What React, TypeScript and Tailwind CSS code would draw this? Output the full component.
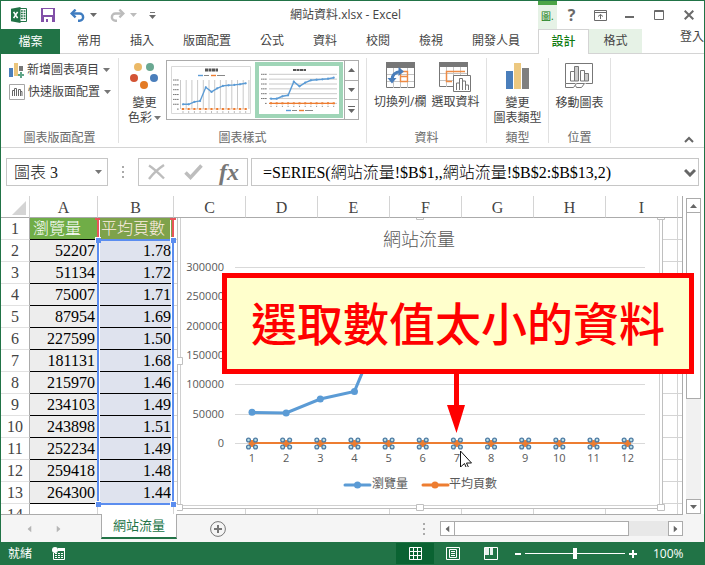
import { useState } from "react";
import type { ReactNode } from "react";

const uiFont = "font-['Open_Sans','Noto_Sans_CJK_TC',sans-serif]";
const cellFont = "font-['Liberation_Serif','Noto_Sans_CJK_TC',serif]";

const tabs = ["常用", "插入", "版面配置", "公式", "資料", "校閱", "檢視", "開發人員"];

const rows: [number, string][] = [
  [52207, "1.78"],
  [51134, "1.72"],
  [75007, "1.71"],
  [87954, "1.69"],
  [227599, "1.50"],
  [181131, "1.68"],
  [215970, "1.46"],
  [234103, "1.49"],
  [243898, "1.51"],
  [252234, "1.49"],
  [259418, "1.48"],
  [264300, "1.44"],
];

const restColumns = ["C", "D", "E", "F", "G", "H", "I"];

const Caret = ({ className = "" }: { className?: string }) => (
  <svg width="7" height="4" viewBox="0 0 7 4" className={className} aria-hidden="true">
    <path d="M0 0h7l-3.5 4z" fill="currentColor" />
  </svg>
);

const ExcelLogo = () => (
  <svg width="16" height="16" viewBox="0 0 16 16" aria-hidden="true">
    <path d="M8 1.5h7.5v13H8z" fill="#fff" stroke="#217346" />
    <path d="M10 4h1.8M12.6 4h1.8M10 6.5h1.8M12.6 6.5h1.8M10 9h1.8M12.6 9h1.8M10 11.5h1.8M12.6 11.5h1.8" stroke="#217346" strokeWidth="1.4" />
    <path d="M0 1.8 9.5 0v16L0 14.2z" fill="#217346" />
    <path d="m2.6 4.8 4 6.4M6.6 4.8l-4 6.4" stroke="#fff" strokeWidth="1.6" />
  </svg>
);

const SaveIcon = () => (
  <svg width="14" height="14" viewBox="0 0 14 14" aria-hidden="true">
    <path d="M0 0h14v14H0z" fill="#8250a8" />
    <path d="M2 1h10v6H2zM3 9h8v5H3z" fill="#fff" />
    <path d="M5 11h2v3H5z" fill="#8250a8" />
  </svg>
);

const UndoIcon = ({ flip = false }: { flip?: boolean }) => (
  <svg width="15" height="13" viewBox="0 0 15 13" aria-hidden="true" className={flip ? "-scale-x-100" : ""}>
    <path d="M2 4.5h7.5a3.6 3.6 0 0 1 0 7.3H8" fill="none" stroke="currentColor" strokeWidth="2.4" />
    <path d="M5.6 0.6 1.6 4.5l4 3.9" fill="none" stroke="currentColor" strokeWidth="2.4" />
  </svg>
);

const AddElementIcon = () => (
  <svg width="15" height="15" viewBox="0 0 15 15" shapeRendering="crispEdges" aria-hidden="true">
    <path d="M0 5h4v9H0z" fill="#4a7ebb" />
    <path d="M5 0h4v13H5z" fill="#ebc57c" />
    <path d="M10 3h4v5h-4z" fill="#777" />
    <path d="M12 9v6M9 12h6" stroke="#5fa587" strokeWidth="2" />
  </svg>
);

const QuickLayoutIcon = () => (
  <svg width="16" height="16" viewBox="0 0 16 16" fill="none" aria-hidden="true">
    <path d="M.5.5h15v15H.5z" stroke="#a6a6a6" />
    <path d="M3.5 12V6.5h2V12M5.5 12V4.5h2V12M9.5 12V5.5h2V12M11.5 12V7.5h1.5V12" stroke="#666" />
  </svg>
);

const ColorsIcon = () => (
  <svg width="28" height="26" viewBox="0 0 28 26" aria-hidden="true">
    <circle cx="8" cy="4" r="4" fill="#ebb967" />
    <circle cx="20" cy="4" r="4" fill="#6aa892" />
    <circle cx="4" cy="15" r="4" fill="#d35434" />
    <circle cx="24" cy="15" r="4" fill="#4a7ebb" />
    <circle cx="14" cy="22" r="4" fill="#e37a24" />
  </svg>
);

const SwitchIcon = () => (
  <svg width="29" height="27" viewBox="0 0 29 27" fill="none" aria-hidden="true">
    <path d="M.5.5h28v25H.5z" fill="#fff" stroke="#777" />
    <path d="M0 0h29v6H0z" fill="#777" />
    <path d="M1 12.5h27M1 19.5h27M7.5 6v20M14.5 6v20M21.5 6v20" stroke="#c4c4c4" />
    <path d="M14.5 9.5h7v10h-7zM14.5 14.5h7" stroke="#ed8b45" strokeWidth="1.4" />
    <path d="M6 18c0-5 3-8 9-8.5" stroke="#4a7ebb" strokeWidth="3" />
    <path d="m12.5 5 5.5 4.5-5.5 4.500zM1.500 16h9L6 21.500z" fill="#4a7ebb" />
  </svg>
);

const SelectDataIcon = () => (
  <svg width="32" height="30" viewBox="0 0 32 30" fill="none" aria-hidden="true">
    <path d="M.5.5h28v24H.5z" fill="#fff" stroke="#777" />
    <path d="M0 0h29v5H0z" fill="#777" />
    <path d="M1 11.5h27M1 18.5h27M7.5 5v20M14.5 5v20M21.5 5v20" stroke="#c4c4c4" />
    <path d="M13 19.5H7.5v-10H26" stroke="#ed8b45" strokeWidth="1.5" />
    <path d="M14.5 13.5h17v16h-17z" fill="#fff" stroke="#777" />
    <path d="M17.5 28v-7h3v7M20.5 28V16.5h3V28M23.5 28v-9h3v9M26.5 28v-5h3v5" stroke="#777" />
  </svg>
);

const ChartTypeIcon = () => (
  <svg width="23" height="26" viewBox="0 0 23 26" shapeRendering="crispEdges" aria-hidden="true">
    <path d="M0 8h7v18H0z" fill="#4a7ebb" />
    <path d="M8 0h7v26H8z" fill="#ecc880" />
    <path d="M16 5h7v21h-7z" fill="#7f7f7f" />
  </svg>
);

const MoveChartIcon = () => (
  <svg width="28" height="26" viewBox="0 0 28 26" fill="none" stroke="#777" aria-hidden="true">
    <path d="M.5 20.500V.5h27v20h-7M.5 20.500h10" />
    <path d="M5.5 18V8.5h4V18zM15.5 18V7.5h4V18z" fill="#fff" />
    <path d="M9.5 18V3.5h4V18zM19.5 18v-7.5h4V18z" fill="#ccc" />
    <path d="M.5 24.5h8l3-4h8l-3 4h-5l-1-2M.5 20.500v4" />
  </svg>
);

const thumbY = [32.7, 32.7, 30.3, 29.3, 15.7, 20.3, 16.7, 14.3, 13.7, 13.3, 12.7, 11.7];

const StyleThumb = ({ vertical = false }: { vertical?: boolean }) => {
  const shift = vertical ? 5.6 : 0;
  const base = vertical ? 43 : 37.3;
  const points = thumbY.map((y, i) => [12 + i * 5.7, y + shift]);
  const legendY = vertical ? 9.5 : 44.5;

  return (
    <svg width="80" height="48" viewBox="0 0 80 48" aria-hidden="true">
      <path d="M.5.5h79v47H.5z" fill="#fff" stroke={vertical ? "#d9d9d9" : "#fff"} />
      <path d="M34 4h13" stroke="#555" strokeWidth={vertical ? 3 : 2} strokeDasharray="3 .5" />
      {vertical
        ? Array.from({ length: 13 }, (_, i) => (
            <path key={i} d={`M${9.5 + i * 5.7} 14v29`} stroke="#bbb" strokeWidth=".8" />
          ))
        : Array.from({ length: 7 }, (_, i) => (
            <path key={i} d={`M10 ${8.3 + i * 4.85}h68`} stroke="#bbb" strokeWidth=".8" />
          ))}
      {Array.from({ length: 7 }, (_, i) => (
        <path
          key={i}
          d={`M${i > 5 ? 6 : 2} ${(vertical ? 14 : 8.3) + i * 4.85}h${i > 5 ? 2 : 6}`}
          stroke="#777"
          strokeDasharray="1.5 .3"
        />
      ))}
      <polyline points={points.map((p) => p.join(",")).join(" ")} fill="none" stroke="#5b9bd5" strokeWidth="1.4" />
      {points.map(([x, y]) => (
        <circle key={x} cx={x} cy={y} r="1.1" fill="#5b9bd5" />
      ))}
      <path d={`M10 ${base}h66`} stroke="#ed7d31" strokeWidth={vertical ? 0.5 : 1.3} />
      {points.map(([x]) => (
        <g key={x}>
          <path d={`M${x - 1} ${base}h2`} stroke="#ed7d31" strokeWidth="2" />
          <path d={`M${x - 0.5} ${base + 3}h1`} stroke="#777" />
        </g>
      ))}
      <path d={`M27 ${legendY}h5`} stroke="#5b9bd5" strokeWidth="1.4" />
      <path d={`M33 ${legendY}h5M46 ${legendY}h8`} stroke="#888" />
      <path d={`M40 ${legendY}h5`} stroke="#ed7d31" strokeWidth="1.4" />
    </svg>
  );
};

const TitleBar = () => (
  <header className="flex h-7 shrink-0 items-center text-[#6a6a6a]">
    <div className="flex flex-1 items-center pl-[10px]">
      <ExcelLogo />
      <button type="button" aria-label="Save" className="ml-[14px]"><SaveIcon /></button>
      <button type="button" aria-label="Undo" className="ml-[15px] flex items-center gap-[5px]">
        <span className="text-[#3f7cc0]"><UndoIcon /></span>
        <Caret />
      </button>
      <button type="button" aria-label="Redo" className="ml-[13px] flex items-center gap-[5px] text-[#bcbcbc]">
        <UndoIcon flip />
        <Caret />
      </button>
      <button type="button" aria-label="Customize" className="ml-3 flex flex-col items-center gap-[2px]">
        <span className="h-px w-[5px] bg-[#777]" />
        <Caret />
      </button>
    </div>
    <h1 className="mr-6 text-xs text-[#444]">網站資料.xlsx - Excel</h1>
    <div className="flex h-full flex-1 items-center justify-end">
      <div className="h-full w-[19px] border-t-4 border-[#4ba446] bg-[#e6f2e6] pl-[3px] text-[10px] leading-[22px] text-[#0f7b0f]">圖.</div>
      <button type="button" aria-label="Help" className="ml-[10px] w-[9px] text-base leading-7 font-bold">?</button>
      <button type="button" aria-label="Ribbon display" className="ml-[18px]">
        <svg width="13" height="11" viewBox="0 0 13 11" fill="none" stroke="currentColor" aria-hidden="true">
          <path d="M.5.5h12v10H.5zM1 2.5h11M6.5 9V4.5M4 6.5l2.5-2 2.5 2" />
        </svg>
      </button>
      <button type="button" aria-label="Minimize" className="ml-[18px] flex h-[11px] items-center pt-1">
        <span className="h-[2px] w-[9px] bg-current" />
      </button>
      <button type="button" aria-label="Maximize" className="ml-5">
        <svg width="10" height="10" viewBox="0 0 10 10" fill="none" stroke="currentColor" aria-hidden="true">
          <path d="M.5.5h9v9H.5zM0 1.5h10" />
        </svg>
      </button>
      <button type="button" aria-label="Close" className="mr-[10px] ml-5">
        <svg width="10" height="10" viewBox="0 0 10 10" fill="none" stroke="currentColor" strokeWidth="2" aria-hidden="true">
          <path d="m.7.7 8.600 8.600M9.300.7.7 9.300" />
        </svg>
      </button>
    </div>
  </header>
);

const RibbonTabs = () => (
  <nav className="flex h-[25px] shrink-0 text-xs leading-6 whitespace-nowrap text-[#444]">
    <button type="button" className="w-[59px] shrink-0 bg-[#217346] text-white">檔案</button>
    <div className="flex grow gap-[29px] border-b border-[#d4d4d4] pl-[17px]">
      {tabs.map((tab) => (
        <button key={tab} type="button">{tab}</button>
      ))}
    </div>
    <button type="button" className="w-[51px] shrink-0 border-x border-t border-[#d4d4d4] bg-white font-medium text-[#0f7b0f]">設計</button>
    <button type="button" className="w-[53px] shrink-0 border-b border-[#d4d4d4] bg-[#e6f2e6]">格式</button>
    <div className="flex w-[62px] shrink-0 justify-end border-b border-[#d4d4d4] leading-4">
      <a href="#signin">登入</a>
    </div>
  </nav>
);

interface GroupProps {
  title: string;
  className: string;
  children: ReactNode;
}

const Group = ({ title, className, children }: GroupProps) => (
  <section className={`flex shrink-0 flex-col border-r border-[#e1e1e1] ${className}`}>
    <div className="min-h-0 flex-1">{children}</div>
    <h2 className="text-center text-xs leading-[10px] text-[#6a6a6a]">{title}</h2>
  </section>
);

interface BigButtonProps {
  icon: ReactNode;
  lines: ReactNode[];
}

const BigButton = ({ icon, lines }: BigButtonProps) => (
  <button type="button" className="flex shrink-0 flex-col items-center whitespace-nowrap">
    <span className="flex h-8 items-start">{icon}</span>
    {lines.map((line, i) => (
      <span key={i} className="flex items-center leading-[15px]">{line}</span>
    ))}
  </button>
);

const Ribbon = () => (
  <div className="flex h-[94px] shrink-0 items-stretch border-b border-[#d4d4d4] py-1 text-xs text-[#444]">
    <Group title="圖表版面配置" className="w-[118px]">
      <div className="flex flex-col gap-[6px] pt-1 pl-2">
        <button type="button" className="flex items-center leading-4">
          <AddElementIcon />
          <span className="mr-1 ml-[3px]">新增圖表項目</span>
          <Caret className="text-[#777]" />
        </button>
        <button type="button" className="flex items-center leading-4">
          <QuickLayoutIcon />
          <span className="mr-1 ml-[3px]">快速版面配置</span>
          <Caret className="text-[#777]" />
        </button>
      </div>
    </Group>
    <Group title="圖表樣式" className="w-[248px]">
      <div className="flex">
        <div className="flex w-[47px] justify-center pt-[5px] pl-1">
          <BigButton
            icon={<ColorsIcon />}
            lines={["變更", <>色彩<Caret className="ml-[2px] text-[#777]" /></>]}
          />
        </div>
        <div className="mt-[2px] flex h-[60px] w-[193px] border border-[#ababab]">
          <button type="button" aria-label="樣式 1" className="w-[88px] p-1"><StyleThumb vertical /></button>
          <button type="button" aria-label="樣式 2" className="my-px border-4 border-[#9fd5b7]"><StyleThumb /></button>
          <div className="ml-px flex flex-1 flex-col divide-y divide-[#ababab] border-l border-[#ababab] text-[#666]">
            <button type="button" aria-label="Up" className="flex flex-1 items-center justify-center"><Caret className="rotate-180" /></button>
            <button type="button" aria-label="Down" className="flex flex-1 items-center justify-center"><Caret /></button>
            <button type="button" aria-label="More" className="flex flex-1 flex-col items-center justify-center gap-[2px]">
              <span className="h-px w-[7px] bg-current" />
              <Caret />
            </button>
          </div>
        </div>
      </div>
    </Group>
    <Group title="資料" className="w-[120px]">
      <div className="flex gap-[5px] pt-1 pl-[7px]">
        <BigButton icon={<SwitchIcon />} lines={["切換列/欄"]} />
        <BigButton icon={<SelectDataIcon />} lines={["選取資料"]} />
      </div>
    </Group>
    <Group title="類型" className="w-[62px]">
      <div className="flex justify-center pt-[5px]">
        <BigButton icon={<ChartTypeIcon />} lines={["變更", "圖表類型"]} />
      </div>
    </Group>
    <Group title="位置" className="w-[62px]">
      <div className="flex justify-center pt-[5px]">
        <BigButton icon={<MoveChartIcon />} lines={["移動圖表"]} />
      </div>
    </Group>
    <div className="flex flex-1 items-end justify-end pr-[10px]">
      <button type="button" aria-label="Collapse">
        <svg width="10" height="7" viewBox="0 0 10 7" fill="none" stroke="#666" strokeWidth="2" aria-hidden="true">
          <path d="m1 6 4-4 4 4" />
        </svg>
      </button>
    </div>
  </div>
);

const FormulaBar = () => {
  const [name, setName] = useState("圖表 3");
  const [formula, setFormula] = useState("=SERIES(網站流量!$B$1,,網站流量!$B$2:$B$13,2)");

  return (
    <div className={`flex shrink-0 items-center px-[5px] py-[10px] text-base text-black ${cellFont}`}>
      <div className="flex h-7 w-[102px] shrink-0 items-center border border-[#c6c6c6] pr-[5px] pl-[7px]">
        <input
          aria-label="Name box"
          className="w-full min-w-0 pt-[2px] font-light text-[#222] outline-none"
          value={name}
          onChange={(e) => setName(e.target.value)}
        />
        <button type="button" aria-label="Names" className="text-[#777]"><Caret /></button>
      </div>
      <div className="flex w-[30px] shrink-0 flex-col items-center gap-[3px]">
        <span className="size-[2px] bg-[#aaa]" />
        <span className="size-[2px] bg-[#aaa]" />
        <span className="size-[2px] bg-[#aaa]" />
      </div>
      <div className="flex h-7 w-[110px] shrink-0 items-center border border-[#c6c6c6] pl-[9px]">
        <button type="button" aria-label="Cancel">
          <svg width="18" height="16" viewBox="0 0 18 16" fill="none" stroke="#bdbdbd" strokeWidth="2.4" aria-hidden="true">
            <path d="M1 1.5c5 3 11 9 15 13M16 1C10 5 4 11 1 15" />
          </svg>
        </button>
        <button type="button" aria-label="Enter" className="ml-[18px]">
          <svg width="19" height="16" viewBox="0 0 19 16" fill="none" stroke="#bdbdbd" strokeWidth="3.5" aria-hidden="true">
            <path d="m1.5 8.500 5 5L17.500 1.500" />
          </svg>
        </button>
        <button type="button" aria-label="Insert function" className="ml-4 text-2xl leading-6 font-bold text-[#777] italic">fx</button>
      </div>
      <div className="ml-[3px] flex h-7 flex-1 items-center border border-[#c6c6c6] pr-[2px] pl-[11px]">
        <input
          aria-label="Formula"
          className="w-full min-w-0 pt-[2px] font-light outline-none"
          value={formula}
          onChange={(e) => setFormula(e.target.value)}
        />
        <button type="button" aria-label="Expand">
          <svg width="12" height="9" viewBox="0 0 12 9" fill="none" stroke="#666" strokeWidth="3" aria-hidden="true">
            <path d="m1 2 5 5 5-5" />
          </svg>
        </button>
      </div>
    </div>
  );
};

const columnHead = "border-r border-b border-r-[#d4d4d4] border-b-[#ababab] p-0 pt-[3px] leading-[18px] font-normal";

const SheetTable = () => (
  <table className={`w-full table-fixed border-separate border-spacing-0 text-base leading-[21px] font-light text-black ${cellFont}`}>
    <colgroup>
      <col className="w-[29px]" />
      <col className="w-[68px]" />
      <col className="w-[76px]" />
      {restColumns.map((c) => <col key={c} className="w-[72px]" />)}
      <col />
    </colgroup>
    <thead className="text-[#444]">
      <tr className="h-[22px]">
        <th className={columnHead}>
          <svg width="14" height="14" viewBox="0 0 14 14" className="ml-[11px]" aria-hidden="true">
            <path d="M14 0v14H0z" fill="#d4d4d4" />
          </svg>
        </th>
        {["A", "B", ...restColumns].map((c) => (
          <th key={c} scope="col" className={columnHead}>{c}</th>
        ))}
        <th className="border-b border-[#ababab] p-0" />
      </tr>
    </thead>
    <tbody>
      {Array.from({ length: 14 }, (_, i) => {
        const data = i > 0 ? rows[i - 1] : undefined;
        return (
          <tr key={i} className="h-[22px]">
            <th scope="row" className="border-r border-b border-r-[#ababab] border-b-[#e1e1e1] p-0 font-normal text-[#444]">{i + 1}</th>
            {i === 0 && (
              <>
                <td className="border-b border-black bg-[#70ad47] p-0 pl-[3px] text-white">瀏覽量</td>
                <td className="border-b border-black bg-[#7ea24a] p-0 pl-[3px] text-[#ffeee4]">平均頁數</td>
              </>
            )}
            {data && (
              <>
                <td className="border-b border-black bg-[#ededed] p-0 pr-[3px] text-right">{data[0]}</td>
                <td className="border-b border-black bg-[#dfe3ee] p-0 pr-[3px] text-right">{data[1]}</td>
              </>
            )}
            {i === 13 && (
              <>
                <td className="border-r border-[#d4d4d4] p-0" />
                <td className="border-r border-[#d4d4d4] p-0" />
              </>
            )}
            {restColumns.map((c) => (
              <td key={c} className="border-r border-b border-[#d4d4d4] p-0" />
            ))}
            <td className="border-b border-[#d4d4d4] p-0" />
          </tr>
        );
      })}
    </tbody>
  </table>
);

// Coloured frames around the name cell and the value range of the selected series
const RangeFrames = () => (
  <svg width="81" height="290" viewBox="0 0 81 290" fill="none" shapeRendering="crispEdges" className="absolute top-[22px] left-[94px]" aria-hidden="true">
    <path d="M4.5 1v19M75.5 1v19" stroke="#fff" />
    <path d="M3 2v18M78 2v18" stroke="#e8555a" strokeWidth="2" />
    <path d="M0 1h5M75 1h6" stroke="#e8555a" strokeWidth="2" />
    <path d="M4.5 24v260M76.5 24v260" stroke="#fff" />
    <path d="M3 22h75v264H3z" stroke="#5b8def" strokeWidth="2" />
    <path d="M0 19h6v6H0zM75 19h6v6h-6zM0 283h6v6H0zM75 283h6v6h-6z" fill="#fff" />
    <path d="M1 20h5v5H1zM76 20h5v5h-5zM1 284h5v5H1zM76 284h5v5h-5z" fill="#5b8def" />
  </svg>
);

const PLOT = { firstX: 75, step: 34.15, zeroY: 225, height: 176 };
const ticks = [0, 50000, 100000, 150000, 200000, 250000, 300000];

const Chart = () => {
  const toX = (i: number) => PLOT.firstX + i * PLOT.step;
  const toY = (v: number) => PLOT.zeroY - (v / 300000) * PLOT.height;
  const points = rows.map(([v], i) => [toX(i), toY(v)]);

  return (
    <svg
      width="488"
      height="294"
      viewBox="0 0 488 294"
      className={`absolute top-[22px] left-[176px] text-[11px] ${uiFont}`}
      role="img"
      aria-label="網站流量"
    >
      <path d="M.5-3v293.500h485V-3" fill="#fff" stroke="#bfbfbf" />
      <path d="M3.5-3v290.500h479V-3" fill="#fff" stroke="#d0d0d0" />
      <text x="242" y="28" textAnchor="middle" fontSize="18" fontWeight="300" fill="#595959">網站流量</text>
      {ticks.map((t) => (
        <g key={t}>
          <path d={`M58 ${Math.round(toY(t)) + 0.5}h410`} stroke="#d9d9d9" />
          <text x="47" y={Math.round(toY(t)) + 4} textAnchor="end" fill="#595959">{t}</text>
        </g>
      ))}
      <polyline points={points.map((p) => p.join(",")).join(" ")} fill="none" stroke="#5b9bd5" strokeWidth="3" />
      {points.map(([x, y]) => (
        <circle key={x} cx={x} cy={y} r="3.5" fill="#5b9bd5" />
      ))}
      <path d={`M${toX(0)} 225h${PLOT.step * 11}`} stroke="#ed7d31" strokeWidth="2" />
      {points.map(([x], i) => (
        <g key={x}>
          <circle cx={x} cy="225.5" r="3.4" fill="#ed7d31" />
          {[-3.5, 3.5].map((dx) =>
            [-3.5, 3.5].map((dy) => (
              <circle key={`${dx} ${dy}`} cx={x + dx} cy={225.5 + dy} r="1.9" fill="#b9dfe6" stroke="#4f7ba3" strokeWidth="1.3" />
            ))
          )}
          <text x={x} y="244" textAnchor="middle" fill="#595959">{i + 1}</text>
        </g>
      ))}
      <path d="M168 267h25" stroke="#5b9bd5" strokeWidth="3" strokeLinecap="round" />
      <circle cx="180.5" cy="267" r="3.5" fill="#5b9bd5" />
      <text x="195" y="270" fontSize="12" fill="#595959">瀏覽量</text>
      <path d="M246 267h25" stroke="#ed7d31" strokeWidth="3" strokeLinecap="round" />
      <circle cx="258" cy="267" r="3.5" fill="#ed7d31" />
      <text x="272" y="270" fontSize="12" fill="#595959">平均頁數</text>
      <path
        d="M-1.5 139.500h7v7h-7zM-1.5 286.500h7v6h-7zM239.500 286.500h7v6h-7zM480.500 286.500h7v6h-7zM239.500-5.500h7v7h-7zM480.500-5.500h7v7h-7z"
        fill="#fff"
        stroke="#c0c0c0"
      />
    </svg>
  );
};

const Callout = () => (
  <div className="absolute top-[77px] right-[10px] left-[221px] z-10 border-[5px] border-[#f00] bg-[#ffffcc]">
    <p className="pl-6 text-[46px] leading-[91px] font-medium whitespace-nowrap text-[#f00]">選取數值太小的資料</p>
    <svg width="34" height="98" viewBox="0 0 34 98" className="absolute top-full left-[220px]" aria-hidden="true">
      <path d="M7 4h5v32h6L9.500 64 0 36h7z" fill="#f00" />
      <path d="M13.500 82v16l4-3.500 3 7 2-1-3-6.500h5z" fill="#fff" stroke="#111" />
    </svg>
  </div>
);

const scrollButton = "flex size-[15px] shrink-0 items-center justify-center border border-[#ababab] bg-white text-[#666]";

const Workspace = () => (
  <main className="relative flex min-h-0 flex-1">
    <div className="relative flex-1 overflow-hidden border-r border-[#ababab]">
      <SheetTable />
      <RangeFrames />
      <Chart />
    </div>
    <div className="mt-[2px] mr-[3px] ml-[3px] flex w-[15px] flex-col bg-[#f1f1f1]">
      <button type="button" aria-label="Scroll up" className={scrollButton}><Caret className="rotate-180" /></button>
      <div className="h-[186px] border border-t-0 border-[#ababab] bg-white" />
      <button type="button" aria-label="Scroll down" className={`mt-auto ${scrollButton}`}><Caret /></button>
    </div>
    <Callout />
  </main>
);

const SheetTabs = () => (
  <div className="flex h-7 shrink-0 bg-[#f5f5f5] pr-[21px] text-xs">
    <div className="flex w-[100px] items-center border-t border-[#ababab] pl-[25px] text-[#b5b5b5]">
      <button type="button" aria-label="Previous sheet"><Caret className="rotate-90" /></button>
      <button type="button" aria-label="Next sheet" className="ml-[22px]"><Caret className="-rotate-90" /></button>
    </div>
    <button type="button" className="mb-[3px] w-[76px] border-x border-b-2 border-x-[#ababab] border-b-[#217346] bg-white text-[13px] text-[#217346]">網站流量</button>
    <div className="flex flex-1 items-center border-t border-[#ababab] pl-[33px]">
      <button type="button" aria-label="New sheet">
        <svg width="16" height="16" viewBox="0 0 16 16" fill="none" stroke="#777" aria-hidden="true">
          <circle cx="8" cy="8" r="7.4" />
          <path d="M8 4v8M4 8h8" strokeWidth="2" />
        </svg>
      </button>
      <div className="mr-[15px] ml-auto flex flex-col gap-[3px]">
        <span className="size-[2px] bg-[#aaa]" />
        <span className="size-[2px] bg-[#aaa]" />
        <span className="size-[2px] bg-[#aaa]" />
      </div>
      <div className="flex h-[15px] w-[243px] bg-[#e8e8e8]">
        <button type="button" aria-label="Scroll left" className={scrollButton}><Caret className="rotate-90" /></button>
        <div className="w-[174px] border border-l-0 border-[#ababab] bg-white" />
        <button type="button" aria-label="Scroll right" className={`ml-auto ${scrollButton}`}><Caret className="-rotate-90" /></button>
      </div>
    </div>
  </div>
);

const StatusBar = () => {
  const [zoom, setZoom] = useState(100);

  return (
    <footer className="flex h-[23px] shrink-0 items-center bg-[#217346] pl-[7px] text-xs text-white">
      <span>就緒</span>
      <button type="button" aria-label="Record macro" className="ml-5">
        <svg width="13" height="13" viewBox="0 0 13 13" aria-hidden="true">
          <path d="M1.5 6v6.500h11v-11H7" fill="none" stroke="#fff" />
          <path d="M6 1h7v3H6z" fill="#fff" />
          <path d="M3 6.500h8M3 8.500h8M3 10.500h8" stroke="#fff" strokeDasharray="2 1" />
          <circle cx="3" cy="3" r="3" fill="#fff" />
        </svg>
      </button>
      <button type="button" aria-label="Normal view" className="ml-auto flex h-[21px] w-[38px] items-center justify-center bg-[#0a6332]">
        <svg width="13" height="13" viewBox="0 0 13 13" fill="none" stroke="#fff" aria-hidden="true">
          <path d="M.5.5h12v12H.5zM4.5 0v13M8.5 0v13M0 4.5h13M0 8.500h13" />
        </svg>
      </button>
      <button type="button" aria-label="Page layout" className="ml-3">
        <svg width="14" height="13" viewBox="0 0 14 13" fill="none" stroke="#fff" aria-hidden="true">
          <path d="M.5.5h13v12H.5zM3.5 2.500h7v8h-7zM5 4.500h4M5 6.500h4M5 8.500h4" />
        </svg>
      </button>
      <button type="button" aria-label="Page break preview" className="ml-6">
        <svg width="14" height="13" viewBox="0 0 14 13" aria-hidden="true">
          <path d="M.5.5h13v12H.5z" fill="none" stroke="#fff" />
          <path d="M1 1h4v7H1zM6 1h3v7H6z" fill="#fff" fillOpacity=".9" />
        </svg>
      </button>
      <button type="button" aria-label="Zoom out" className="mr-1 ml-[17px] py-2">
        <span className="block h-[2px] w-[6px] bg-white" />
      </button>
      <input
        type="range"
        aria-label="Zoom"
        min={10}
        max={190}
        value={zoom}
        onChange={(e) => setZoom(Number(e.target.value))}
        className="h-[11px] w-[100px] appearance-none bg-transparent [&::-webkit-slider-runnable-track]:h-px [&::-webkit-slider-runnable-track]:bg-white [&::-webkit-slider-thumb]:-mt-[5px] [&::-webkit-slider-thumb]:h-[11px] [&::-webkit-slider-thumb]:w-1 [&::-webkit-slider-thumb]:appearance-none [&::-webkit-slider-thumb]:bg-white"
      />
      <button type="button" aria-label="Zoom in" className="ml-1">
        <svg width="8" height="8" viewBox="0 0 8 8" stroke="#fff" strokeWidth="2" aria-hidden="true">
          <path d="M4 0v8M0 4h8" />
        </svg>
      </button>
      <span className="w-[67px] pl-4">{zoom}%</span>
    </footer>
  );
};

const App = () => {
  return (
    <div className={`flex h-screen flex-col overflow-hidden border-x border-t border-[#217346] bg-white ${uiFont}`}>
      <TitleBar />
      <RibbonTabs />
      <Ribbon />
      <FormulaBar />
      <Workspace />
      <SheetTabs />
      <StatusBar />
    </div>
  );
};

export default App;
